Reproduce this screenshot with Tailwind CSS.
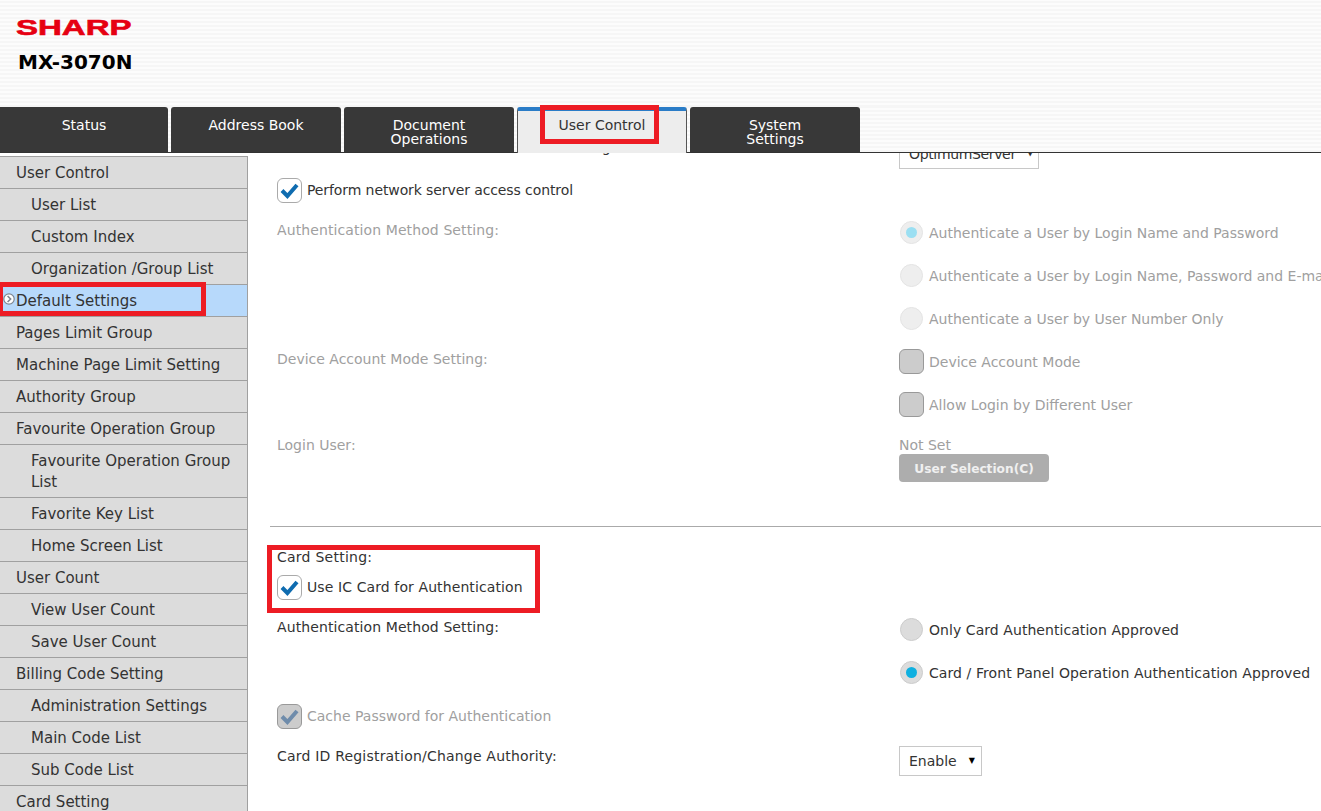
<!DOCTYPE html>
<html lang="en">
  <head>
    <meta charset="UTF-8" />
    <title>MX-3070N</title>
    <script src="https://cdn.jsdelivr.net/npm/@tailwindcss/browser@4"></script>
  </head>
  <body class="relative h-[811px] overflow-hidden bg-white font-['DejaVu_Sans',sans-serif] text-[14px] text-[#333]">
    <!-- Header -->
    <header class="h-[107px] pl-[16px] pt-[18px] bg-[repeating-linear-gradient(0deg,#f6f6f6_0px,#f6f6f6_2px,#fcfcfc_2px,#fcfcfc_4px)]">
      <div class="h-[20px] origin-left scale-x-[1.5] font-['Liberation_Sans',sans-serif] text-[22px] leading-[20px] font-bold text-[#e60012] [-webkit-text-stroke:0.6px_#e60012]">SHARP</div>
      <div class="mt-[4px] pl-[2px] text-[20px] leading-[40px] font-bold text-black">MX-3070N</div>
    </header>

    <!-- Tabs -->
    <nav class="flex h-[46px] gap-[3px] border-b border-[#333] bg-[repeating-linear-gradient(0deg,#f6f6f6_0px,#f6f6f6_2px,#fcfcfc_2px,#fcfcfc_4px)] text-[14px] leading-[14px] text-white">
      <div class="flex h-[45px] w-[168px] justify-center rounded-tr-[3px] bg-[#383838] pt-[11px] text-center">Status</div>
      <div class="flex h-[45px] w-[170px] justify-center rounded-t-[3px] bg-[#383838] pt-[11px] text-center">Address Book</div>
      <div class="h-[45px] w-[170px] rounded-t-[3px] bg-[#383838] pt-[11px] text-center">Document<br />Operations</div>
      <div class="z-10 flex h-[46px] w-[170px] justify-center rounded-t-[3px] border-x border-x-[#555] border-t-4 border-t-[#2a7cc7] bg-[#ededed] pt-[7px] text-center text-[#333]">User Control</div>
      <div class="h-[45px] w-[170px] rounded-t-[3px] bg-[#383838] pt-[11px] text-center">System<br />Settings</div>
    </nav>

    <div class="flex h-[658px] overflow-hidden">
      <!-- Sidebar -->
      <aside class="mt-[3px] w-[248px] shrink-0 border-r border-t border-[#a0a0a0] bg-[#dcdcdc] text-[15px] leading-[21px]">
        <div class="border-b border-[#a0a0a0] pb-[4px] pt-[6px] pl-[16px]">User Control</div>
        <div class="border-b border-[#a0a0a0] pb-[4px] pt-[6px] pl-[31px]">User List</div>
        <div class="border-b border-[#a0a0a0] pb-[4px] pt-[6px] pl-[31px]">Custom Index</div>
        <div class="border-b border-[#a0a0a0] pb-[4px] pt-[6px] pl-[31px]">Organization /Group List</div>
        <div class="relative border-b border-[#a0a0a0] bg-[#b7d9fb] pb-[4px] pt-[6px] pl-[16px]">
          <svg class="absolute left-[3px] top-[8px] h-[12px] w-[12px]" viewBox="0 0 12 12">
            <circle cx="6" cy="6" r="5.2" fill="#fff" stroke="#7d8590" stroke-width="1.2" />
            <path d="M4.6 3 L7.6 6 L4.6 9" fill="none" stroke="#7d8590" stroke-width="1.6" />
          </svg>
          Default Settings
        </div>
        <div class="border-b border-[#a0a0a0] pb-[4px] pt-[6px] pl-[16px]">Pages Limit Group</div>
        <div class="border-b border-[#a0a0a0] pb-[4px] pt-[6px] pl-[16px]">Machine Page Limit Setting</div>
        <div class="border-b border-[#a0a0a0] pb-[4px] pt-[6px] pl-[16px]">Authority Group</div>
        <div class="border-b border-[#a0a0a0] pb-[4px] pt-[6px] pl-[16px]">Favourite Operation Group</div>
        <div class="border-b border-[#a0a0a0] pb-[4px] pt-[6px] pl-[31px] pr-[10px]">Favourite Operation Group List</div>
        <div class="border-b border-[#a0a0a0] pb-[4px] pt-[6px] pl-[31px]">Favorite Key List</div>
        <div class="border-b border-[#a0a0a0] pb-[4px] pt-[6px] pl-[31px]">Home Screen List</div>
        <div class="border-b border-[#a0a0a0] pb-[4px] pt-[6px] pl-[16px]">User Count</div>
        <div class="border-b border-[#a0a0a0] pb-[4px] pt-[6px] pl-[31px]">View User Count</div>
        <div class="border-b border-[#a0a0a0] pb-[4px] pt-[6px] pl-[31px]">Save User Count</div>
        <div class="border-b border-[#a0a0a0] pb-[4px] pt-[6px] pl-[16px]">Billing Code Setting</div>
        <div class="border-b border-[#a0a0a0] pb-[4px] pt-[6px] pl-[31px]">Administration Settings</div>
        <div class="border-b border-[#a0a0a0] pb-[4px] pt-[6px] pl-[31px]">Main Code List</div>
        <div class="border-b border-[#a0a0a0] pb-[4px] pt-[6px] pl-[31px]">Sub Code List</div>
        <div class="border-b border-[#a0a0a0] pb-[4px] pt-[6px] pl-[16px]">Card Setting</div>
      </aside>

      <!-- Content, scrolled so the first row is cut by the tab bar -->
      <main class="min-w-0 flex-1 overflow-hidden leading-[20px]">
        <div class="-mt-[14px] grid h-[30px] grid-cols-[622px_1fr] pl-[29px]">
          <div class="-mt-[2px] whitespace-nowrap">Default Network Authentication Servers Setting:</div>
          <div class="flex h-[30px] w-[140px] items-center justify-between border border-[#c8c8c8] pl-[9px] pr-[6px]"><span class="tracking-[-0.35px]">OptimumServer</span><span class="text-[5px]">▼</span></div>
        </div>

        <div class="mt-[8px] flex h-[26px] items-center gap-[5px] pl-[29px]">
          <div class="flex h-[25px] w-[25px] items-center justify-center rounded-[6px] border border-[#aaa] bg-white">
            <svg class="h-[19px] w-[19px]" viewBox="0 0 19 19"><path d="M2 9.5 L7.4 15 L17 4" fill="none" stroke="#0f6cb0" stroke-width="4" /></svg>
          </div>
          <span class="tracking-[-0.1px]">Perform network server access control</span>
        </div>

        <div class="mt-[16px] grid grid-cols-[622px_1fr] pl-[29px] text-[#a0a0a0]">
          <div class="pt-px tracking-[0.1px]">Authentication Method Setting:</div>
          <div class="flex flex-col gap-[18px] pt-[1px]">
            <div class="flex h-[25px] items-center gap-[6px] whitespace-nowrap pl-[1px]">
              <span class="flex h-[23px] w-[23px] items-center justify-center rounded-full border border-[#e4e4e4] bg-[#eee]"><span class="h-[11px] w-[11px] rounded-full bg-[#9bdff2]"></span></span>
              Authenticate a User by Login Name and Password
            </div>
            <div class="flex h-[25px] items-center gap-[6px] whitespace-nowrap pl-[1px]">
              <span class="h-[23px] w-[23px] rounded-full border border-[#e4e4e4] bg-[#eee]"></span>
              Authenticate a User by Login Name, Password and E-mail Address
            </div>
            <div class="flex h-[25px] items-center gap-[6px] whitespace-nowrap pl-[1px]">
              <span class="h-[23px] w-[23px] rounded-full border border-[#e4e4e4] bg-[#eee]"></span>
              Authenticate a User by User Number Only
            </div>
          </div>
        </div>

        <div class="mt-[18px] grid grid-cols-[622px_1fr] pl-[29px] text-[#a0a0a0]">
          <div>Device Account Mode Setting:</div>
          <div class="flex flex-col gap-[18px]">
            <div class="flex h-[25px] items-center gap-[5px]">
              <span class="h-[25px] w-[25px] rounded-[6px] border border-[#999] bg-[#ccc]"></span>
              Device Account Mode
            </div>
            <div class="flex h-[25px] items-center gap-[5px]">
              <span class="h-[25px] w-[25px] rounded-[6px] border border-[#999] bg-[#ccc]"></span>
              Allow Login by Different User
            </div>
          </div>
        </div>

        <div class="mt-[18px] grid grid-cols-[622px_1fr] pl-[29px] text-[#a0a0a0]">
          <div>Login User:</div>
          <div>
            <div class="h-[19px]">Not Set</div>
            <div class="flex h-[28px] w-[150px] items-center justify-center rounded-[4px] bg-[#adadad] pt-px text-[12.2px] font-bold text-[#f0f0f0]">User Selection(C)</div>
          </div>
        </div>

        <div class="ml-[22px] mt-[44px] border-t border-[#aaa]"></div>

        <div class="mt-[20px] pl-[29px] tracking-[0.25px]">Card Setting:</div>
        <div class="mt-[7px] flex h-[26px] items-center gap-[5px] pl-[29px]">
          <div class="flex h-[25px] w-[25px] items-center justify-center rounded-[6px] border border-[#aaa] bg-white">
            <svg class="h-[19px] w-[19px]" viewBox="0 0 19 19"><path d="M2 9.5 L7.4 15 L17 4" fill="none" stroke="#0f6cb0" stroke-width="4" /></svg>
          </div>
          <span class="tracking-[0.1px]">Use IC Card for Authentication</span>
        </div>

        <div class="mt-[17px] grid grid-cols-[622px_1fr] pl-[29px]">
          <div class="tracking-[0.1px]">Authentication Method Setting:</div>
          <div class="flex flex-col gap-[18px]">
            <div class="flex h-[25px] items-center gap-[6px] whitespace-nowrap pl-[1px] tracking-[0.06px]">
              <span class="h-[23px] w-[23px] rounded-full border border-[#ccc] bg-[#dcdcdc]"></span>
              Only Card Authentication Approved
            </div>
            <div class="flex h-[25px] items-center gap-[6px] whitespace-nowrap pl-[1px] tracking-[0.08px]">
              <span class="flex h-[23px] w-[23px] items-center justify-center rounded-full border border-[#ccc] bg-[#dcdcdc]"><span class="h-[11px] w-[11px] rounded-full bg-[#0fb0e0]"></span></span>
              Card / Front Panel Operation Authentication Approved
            </div>
          </div>
        </div>

        <div class="mt-[18px] flex h-[26px] items-center gap-[5px] pl-[29px] text-[#a0a0a0]">
          <div class="flex h-[25px] w-[25px] items-center justify-center rounded-[6px] border border-[#999] bg-[#ccc]">
            <svg class="h-[19px] w-[19px]" viewBox="0 0 19 19"><path d="M2 9.5 L7.4 15 L17 4" fill="none" stroke="#6f8cab" stroke-width="4" /></svg>
          </div>
          <span>Cache Password for Authentication</span>
        </div>

        <div class="mt-[17px] grid grid-cols-[622px_1fr] pl-[29px]">
          <div class="tracking-[0.2px]">Card ID Registration/Change Authority:</div>
          <div class="flex h-[30px] w-[83px] items-center justify-between border border-[#c8c8c8] pl-[9px] pr-[6px]">Enable<span class="text-[8px] text-black">▼</span></div>
        </div>
      </main>
    </div>

    <!-- Red annotation boxes over the screenshot -->
    <div class="absolute left-[540px] top-[105px] z-20 h-[39px] w-[119px] border-[5px] border-[#ed1c24]"></div>
    <div class="absolute -left-[2px] top-[282px] z-20 h-[34px] w-[208px] border-[5px] border-[#ed1c24]"></div>
    <div class="absolute left-[267px] top-[545px] z-20 h-[68px] w-[273px] border-[5px] border-[#ed1c24]"></div>
  </body>
</html>
